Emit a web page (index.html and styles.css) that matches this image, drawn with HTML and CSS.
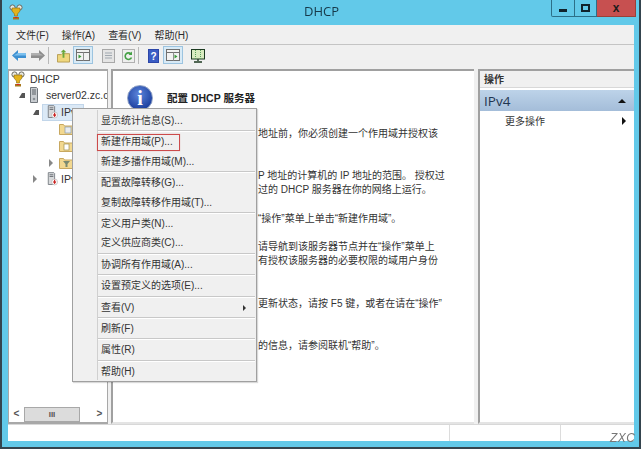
FILE: index.html
```html
<!DOCTYPE html>
<html lang="zh-CN">
<head>
<meta charset="utf-8">
<title>DHCP</title>
<link rel="stylesheet" href="styles.css">
</head>
<body>
<svg class="defs" width="0" height="0">
  <defs>
    <symbol id="dhcp" viewBox="0 0 14 16">
      <circle cx="3.5" cy="3.5" r="2.6" fill="#e8e8e0" stroke="#6a6a60"/>
      <circle cx="10.5" cy="3.5" r="2.6" fill="#e8e8e0" stroke="#6a6a60"/>
      <path d="M3 4h8v3l-2.5 3v2h-3v-2L3 7z" fill="#e3b31c" stroke="#8a6a10" stroke-width=".6"/>
      <path d="M4 13h6v2.500H4z" fill="#a8781c"/>
      <path d="M5.500 13h3v1H5.500z" fill="#d22"/>
    </symbol>
    <symbol id="server" viewBox="0 0 8 16">
      <path d="M.5.5h6l1 1v14h-7z" fill="#c8ccd0" stroke="#70767c"/>
      <path d="M2 3h4M2 5h4M2 7h4" stroke="#5a6066"/>
      <circle cx="4" cy="12" r="1.300" fill="#8a9096"/>
    </symbol>
    <symbol id="ipnode" viewBox="0 0 13 16">
      <path d="M1.500.5h6.500l1 1v13H1.500z" fill="#d8dadc" stroke="#70767c"/>
      <path d="M3 3h4.500M3 5h4.500" stroke="#5a6066"/>
      <circle cx="9" cy="11.500" r="3.500" fill="#fff" stroke="#a0a0a0" stroke-width=".6"/>
      <path d="M9 9v3.500M7.500 11l1.500 2 1.500-2" fill="none" stroke="#c81e1e" stroke-width="1.300"/>
    </symbol>
    <symbol id="folder" viewBox="0 0 14 13">
      <path d="M.5 2.500h4l1 1.500h8v8.500H.5z" fill="#f2d890" stroke="#c8a860"/>
    </symbol>
    <symbol id="panel" viewBox="0 0 20 18">
      <rect x=".5" y=".5" width="19" height="17" fill="#d8eaf6" stroke="#9cc4e0"/>
      <rect x="3.500" y="3.500" width="13" height="11" fill="#f2f2f2" stroke="#707070"/>
      <path d="M3.500 6.500h13" stroke="#707070"/>
      <path d="M10.500 6.500v8" stroke="#909090"/>
    </symbol>
  </defs>
</svg>
<div class="window">
  <header class="titlebar">
    <svg class="title-icon"><use href="#dhcp"/></svg>
    <div class="title">DHCP</div>
    <div class="controls">
      <div class="ctl ctl-min"><span class="min-glyph"></span></div>
      <div class="ctl ctl-max"><span class="max-glyph"></span></div>
      <div class="ctl ctl-close">x</div>
    </div>
  </header>
  <div class="client">
    <nav class="menubar">
      <span>文件(F)</span><span>操作(A)</span><span>查看(V)</span><span>帮助(H)</span>
    </nav>
    <div class="toolbar">
      <svg class="tb tb-arrow" viewBox="0 0 14 11"><path d="M0 5.500L6 0v3h8v5H6v3z" fill="#3c8fd0"/><path d="M6 3h8v2.500H1.500z" fill="#7cc0ee"/></svg>
      <svg class="tb tb-arrow tb-next" viewBox="0 0 14 11"><path d="M14 5.500L8 0v3H0v5h8v3z" fill="#8c8c8c"/><path d="M8 3H0v2.500h12.500z" fill="#b0b0b0"/></svg>
      <i class="tb-sep"></i>
      <svg class="tb tb-up" viewBox="0 0 14 14"><path d="M.5 5.500h4l1-1h8v9H.5z" fill="#efd77e" stroke="#b49a50"/><path d="M6 9V3H4l3-3 3 3H8v6z" fill="#6aa83c"/></svg>
      <svg class="tb tb-panel"><use href="#panel"/><path d="M8.500 10.500l-3-2v4z" fill="#3a9a3a"/></svg>
      <svg class="tb tb-doc" viewBox="0 0 13 14"><rect x=".5" y=".5" width="12" height="13" fill="#e4e4e4" stroke="#a8a8a8"/><path d="M3 4h7M3 6.500h7M3 9h7" stroke="#a0a8b0"/></svg>
      <svg class="tb tb-refresh" viewBox="0 0 13 14"><rect x=".5" y=".5" width="12" height="13" fill="#eee" stroke="#b0b0b0"/><path d="M9.500 8.500a3.300 3.300 0 1 1-.5-3.500" fill="none" stroke="#45a045" stroke-width="1.600"/><path d="M10 2.500v3.500H6.500z" fill="#45a045"/></svg>
      <i class="tb-sep tb-sep-b"></i>
      <svg class="tb tb-help" viewBox="0 0 11 14"><rect width="11" height="14" fill="#2c46a8"/><rect x="1" y="1" width="9" height="12" fill="#3a5cc4"/><text x="5.500" y="11" text-anchor="middle" class="help-q">?</text></svg>
      <svg class="tb tb-panel tb-panel-b"><use href="#panel"/><path d="M11.500 8.500l3 2-3 2z" fill="#3a9a3a"/></svg>
      <svg class="tb tb-monitor" viewBox="0 0 14 14"><rect x=".5" y=".5" width="13" height="9.500" fill="#d8ecc0" stroke="#1c3a20"/><path d="M4.500 1v9M9.500 1v9" stroke="#5aa05a" stroke-dasharray="1 1"/><path d="M7 10v2M3 13h8" stroke="#1c3a20" stroke-width="1.400"/></svg>
    </div>
    <main class="panes">
      <aside class="tree">
        <ul class="tree-list">
          <li class="row row-root"><svg class="ico ico-root"><use href="#dhcp"/></svg><span class="row-label">DHCP</span></li>
          <li class="row lvl1"><i class="exp exp-open"></i><svg class="ico ico-srv"><use href="#server"/></svg><span class="row-label label-srv">server02.zc.c</span></li>
          <li class="row lvl2"><i class="exp exp-open"></i><span class="selected"><svg class="ico ico-ip"><use href="#ipnode"/></svg><span class="row-label label-ip">IPv4</span></span></li>
          <li class="row lvl3"><svg class="ico ico-fold" viewBox="0 0 14 13"><use href="#folder"/><rect x="6" y="5" width="6" height="6" fill="#e8ecf0" stroke="#8a9aaa" stroke-width=".7"/></svg></li>
          <li class="row lvl3"><svg class="ico ico-fold" viewBox="0 0 14 13"><use href="#folder"/><rect x="5" y="5" width="5" height="6" fill="#fff" stroke="#a09050" stroke-width=".7"/></svg></li>
          <li class="row lvl3b"><i class="exp exp-closed"></i><svg class="ico ico-fold" viewBox="0 0 14 13"><use href="#folder"/><path d="M4 5h7L8.500 8v3h-2V8z" fill="#7a8a70"/></svg></li>
          <li class="row lvl2b"><i class="exp exp-closed"></i><svg class="ico ico-ip"><use href="#ipnode"/></svg><span class="row-label label-ip">IPv6</span></li>
        </ul>
        <div class="hscroll">
          <div class="sb-btn">&lt;</div>
          <div class="sb-thumb">III</div>
          <div class="sb-track"></div>
          <div class="sb-btn">&gt;</div>
        </div>
      </aside>
      <section class="content">
        <div class="heading">
          <div class="info-icon">i</div>
          <h1 class="heading-text">配置 DHCP 服务器</h1>
        </div>
        <div class="copy">
          <p class="para p1">地址前，你必须创建一个作用域并授权该</p>
          <p class="para p2">P 地址的计算机的 IP 地址的范围。 授权过<br>过的 DHCP 服务器在你的网络上运行。</p>
          <p class="para p3">“操作”菜单上单击“新建作用域”。</p>
          <p class="para p4">请导航到该服务器节点并在“操作”菜单上<br>有授权该服务器的必要权限的域用户身份</p>
          <p class="para p5">更新状态，请按 F5 键，或者在请在“操作”</p>
          <p class="para p6">的信息，请参阅联机“帮助”。</p>
        </div>
      </section>
      <aside class="actions">
        <div class="act-head">操作</div>
        <div class="act-group"><span>IPv4</span><i class="tri-up"></i></div>
        <div class="act-item"><span>更多操作</span><i class="tri-right"></i></div>
      </aside>
    </main>
    <footer class="status">
      <div class="st st-a"></div>
      <div class="st st-b"></div>
      <div class="st st-c"></div>
    </footer>
  </div>
  <div class="menu">
    <div class="item">显示统计信息(S)...</div>
    <div class="sep"></div>
    <div class="item item-marked">新建作用域(P)...</div>
    <div class="item">新建多播作用域(M)...</div>
    <div class="sep"></div>
    <div class="item">配置故障转移(G)...</div>
    <div class="item">复制故障转移作用域(T)...</div>
    <div class="sep"></div>
    <div class="item">定义用户类(N)...</div>
    <div class="item">定义供应商类(C)...</div>
    <div class="sep"></div>
    <div class="item">协调所有作用域(A)...</div>
    <div class="sep"></div>
    <div class="item">设置预定义的选项(E)...</div>
    <div class="sep"></div>
    <div class="item item-sub">查看(V)<i class="tri-right tri-small"></i></div>
    <div class="sep"></div>
    <div class="item">刷新(F)</div>
    <div class="sep"></div>
    <div class="item">属性(R)</div>
    <div class="sep"></div>
    <div class="item">帮助(H)</div>
  </div>
  <div class="watermark">ZXC</div>
</div>
</body>
</html>
```
FILE: styles.css
```css
* { box-sizing: border-box; }
html, body { margin: 0; padding: 0; background: #fff; overflow: hidden; }
body {
  width: 644px;
  height: 451px;
  font-family: "Liberation Sans", "Noto Sans CJK SC", sans-serif;
  font-size: 10px;
  color: #333;
}
.defs { position: absolute; }
.window {
  position: relative;
  margin-left: 2px;
  width: 637px;
  height: 447px;
  background: #62c9e9;
  box-shadow: 0 0 0 2px #34444e;
  display: flex;
  flex-direction: column;
  padding: 0 5px 6px 6px;
  filter: blur(.3px);
}
.titlebar {
  height: 25px;
  flex: none;
  display: flex;
  position: relative;
  margin: 0 -5px 0 -6px;
}
.title-icon { width: 14px; height: 16px; margin: 4px 0 0 7px; }
.title {
  position: absolute;
  left: 0;
  right: 0;
  top: 1px;
  text-align: center;
  font: 13px/20px "Open Sans", "Noto Sans", sans-serif;
  color: #16394a;
  padding-left: 2px;
}
.controls { margin-left: auto; margin-right: 3px; display: flex; height: 17px; position: relative; }
.ctl {
  border: 1px solid #2c6f88;
  border-top: 0;
  display: flex;
  align-items: center;
  justify-content: center;
}
.ctl-min { width: 24px; border-radius: 0 0 0 2px; }
.ctl-max { width: 22px; border-left: 0; }
.ctl-close {
  width: 39px;
  background: #c75050;
  border-color: #9a4038;
  border-left: 0;
  color: #1c1c1c;
  font: bold 12px/15px "Liberation Sans", sans-serif;
}
.min-glyph { width: 8px; height: 3px; background: #10232c; margin-top: 5px; }
.max-glyph { width: 9px; height: 8px; border: 2px solid #10232c; }

.client { flex: 1; min-height: 0; display: flex; flex-direction: column; background: #f0f0f0; }
.menubar {
  height: 20px;
  flex: none;
  display: flex;
  padding-left: 8px;
  gap: 13px;
  align-items: center;
  border-bottom: 1px solid #c4c4c4;
  color: #2c2c2c;
}
.toolbar { height: 24px; flex: none; position: relative; display: flex; align-items: center; padding-left: 4px; }
.tb { flex: none; display: block; }
.tb-arrow { width: 14px; height: 11px; margin-top: -4px; }
.tb-next { margin-left: 5px; }
.tb-sep { width: 1px; height: 17px; background: #b8b8b8; margin: -3px 0 0 3px; flex: none; }
.tb-up { width: 13px; height: 14px; margin: -3px 0 0 8px; }
.tb-panel { width: 20px; height: 18px; margin: -4px 0 0 3px; }
.tb-doc { width: 13px; height: 14px; margin: -3px 0 0 9px; }
.tb-refresh { width: 13px; height: 14px; margin: -3px 0 0 7px; }
.tb-help { width: 11px; height: 14px; margin: -3px 0 0 9px; }
.help-q { font: bold 10px "Liberation Sans", sans-serif; fill: #fff; }
.tb-panel-b { margin-left: 4px; }
.tb-monitor { width: 14px; height: 14px; margin: -3px 0 0 8px; }

.panes { flex: 1; min-height: 0; display: grid; grid-template-columns: 100px 3px 363px 4px 1fr; background: #f0f0f0; }
.tree {
  grid-column: 1;
  border: 1px solid #a8a8a8;
  border-top-width: 2px;
  border-bottom-width: 2px;
  background: #fff;
  display: flex;
  flex-direction: column;
  overflow: hidden;
}
.tree-list { list-style: none; margin: 0; padding: 0; flex: 1; }
.row { height: 16.800px; display: flex; align-items: center; white-space: nowrap; color: #333; font-size: 10.500px; line-height: 16px; }
.row-root { height: 15px; margin-bottom: 1px; padding-left: 2px; }
.row-label { margin-left: 5px; }
.label-srv { margin-left: 8px; }
.label-ip { margin-left: 3px; }
.lvl1 { padding-left: 10px; }
.lvl2 { padding-left: 24px; }
.lvl2b { padding-left: 24px; }
.lvl3 { padding-left: 50px; }
.lvl3b { padding-left: 40px; }
.ico { display: block; flex: none; }
.ico-root { width: 14px; height: 16px; }
.ico-srv { width: 8px; height: 16px; margin-left: 5px; }
.ico-ip { width: 11px; height: 14px; }
.ico-fold { width: 14px; height: 13px; }
.selected { display: flex; align-items: center; height: 17px; background: #dbe9f6; border: 1px solid #c2d6ea; width: 42px; margin-left: 3px; padding-left: 4px; flex: none; }
.exp { width: 0; height: 0; flex: none; display: block; }
.exp-open { border-left: 3px solid transparent; border-bottom: 5px solid #555; border-right: 3px solid #555; }
.exp-closed { border-left: 4px solid #888; border-top: 4px solid transparent; border-bottom: 4px solid transparent; margin-right: 6px; }
.lvl2b .exp-closed { margin-right: 10px; }
.hscroll { height: 15px; flex: none; display: flex; background: #fff; align-items: stretch; padding: 0 1px; color: #555; }
.sb-btn { width: 13px; font: bold 10px/14px "Liberation Sans", sans-serif; text-align: center; }
.sb-thumb { width: 56px; background: #dcdcdc; border: 1px solid #a8a8a8; text-align: center; font: bold 8px/13px "Liberation Sans", sans-serif; color: #555; margin-left: 1px; }
.sb-track { flex: 1; }

.content {
  grid-column: 3;
  background: #fff;
  border-left: 2px solid #a0a0a0;
  border-top: 2px solid #a0a0a0;
  border-bottom: 2px solid #e4e4e4;
  padding: 14px 0 0 14px;
  overflow: hidden;
  white-space: nowrap;
}
.heading { display: flex; align-items: center; gap: 14px; height: 26px; }
.info-icon {
  width: 26px;
  height: 26px;
  flex: none;
  border-radius: 50%;
  background: radial-gradient(circle at 45% 35%, #5c86dc, #1c3f9e 75%);
  border: 1px solid #8ea0c4;
  color: #fff;
  text-align: center;
  font: bold 20px/24px "Liberation Serif", serif;
}
.heading-text { margin: 0; font-size: 10.500px; font-weight: 700; color: #222; line-height: 18px; }
.copy { margin: 0 0 0 131px; color: #333; }
.para { margin: 0; line-height: 14px; }
.p1 { margin-top: 16px; }
.p2 { margin-top: 28px; }
.p3 { margin-top: 15px; }
.p4 { margin-top: 14px; }
.p5 { margin-top: 29px; }
.p6 { margin-top: 28px; }

.actions {
  grid-column: 5;
  background: #fff;
  border-left: 2px solid #a0a0a0;
  border-top: 2px solid #a0a0a0;
  border-bottom: 2px solid #e4e4e4;
}
.act-head { height: 17px; background: #f0f0f0; padding-left: 4px; font-weight: 700; line-height: 17px; border-bottom: 1px solid #d8d8d8; color: #333; }
.act-group {
  height: 21px;
  margin-top: 2px;
  background: linear-gradient(#bdd3e9, #a4bdd9);
  display: flex;
  align-items: center;
  justify-content: space-between;
  padding: 0 8px 0 4px;
  font: 13.500px/20px "Open Sans", "Noto Sans", sans-serif;
  color: #1f3550;
}
.act-item { height: 19px; display: flex; align-items: center; justify-content: space-between; padding: 0 8px 0 25px; color: #333; }
.tri-up { width: 0; height: 0; border: 4px solid transparent; border-top: 0; border-bottom: 4px solid #111; }
.tri-right { width: 0; height: 0; border: 4px solid transparent; border-right: 0; border-left: 4px solid #111; }
.tri-small { border-width: 3px; border-right-width: 0; position: absolute; right: 9px; top: 7px; border-left-color: #333; }

.status { height: 17px; flex: none; display: grid; grid-template-columns: 442px 111px 1fr; background: #fff; border-top: 1px solid #d8d8d8; }
.st { border-right: 1px solid #dcdcdc; }
.st-c { border-right: 0; }

.menu {
  position: absolute;
  left: 70px;
  top: 108px;
  width: 185px;
  height: 274px;
  background: #f0f0f0;
  border: 1px solid #a0a0a0;
  box-shadow: 1px 1px 1px rgba(0, 0, 0, .15);
  padding: 2px 1px 0 26px;
  color: #333;
}
.menu::before {
  content: "";
  position: absolute;
  left: 24px;
  top: 1px;
  bottom: 1px;
  width: 1px;
  background: #d0d0d0;
}
.item { position: relative; height: 19.400px; line-height: 19.400px; padding-left: 2px; white-space: nowrap; }
.sep { height: 2px; margin-left: -1px; border-top: 1px solid #c8c8c8; border-bottom: 1px solid #fff; }
.item-marked::after {
  content: "";
  position: absolute;
  left: -2px;
  top: 2px;
  width: 81px;
  height: 15px;
  border: 1.500px solid #cc4b4b;
  box-shadow: 0 0 1px rgba(200, 60, 60, .4);
}
.watermark {
  position: absolute;
  left: 608px;
  top: 431px;
  font: italic 12px/14px "Liberation Sans", sans-serif;
  letter-spacing: .5px;
  color: #777;
}
```
